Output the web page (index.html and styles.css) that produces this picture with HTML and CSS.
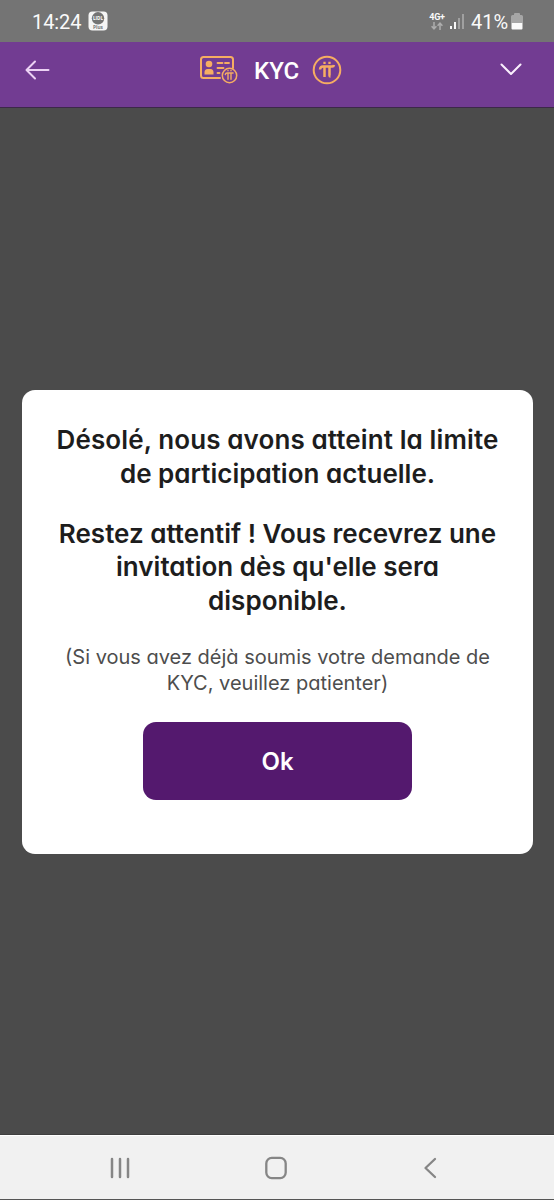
FILE: index.html
```html
<!DOCTYPE html>
<html lang="fr">
<head>
<meta charset="utf-8">
<title>KYC</title>
<link rel="stylesheet" href="styles.css">
</head>
<body>
<div class="screen">
  <div class="status">
    <span class="clock">14:24</span>
    <svg class="app-badge" width="20" height="20" viewBox="0 0 20 20">
      <rect x=".5" y=".5" width="19" height="19" rx="4" fill="#f5f5f5"/>
      <circle cx="10" cy="7.3" r="6.2" fill="#747474"/>
      <text class="badge-name" x="10" y="8.8" textLength="10" lengthAdjust="spacingAndGlyphs">LIDL</text>
      <text class="badge-plus" x="10" y="18" textLength="10" lengthAdjust="spacingAndGlyphs">Plus</text>
    </svg>
    <div class="network">
      <span class="network-type">4G+</span>
      <svg width="12" height="8" viewBox="0 0 12 8" fill="none" stroke="#adadad" stroke-width="1.5"><path d="M3 0v6.5M.6 4.2 3 6.8l2.4-2.6M9 8V1.2M6.6 3.8 9 1.2l2.4 2.6"/></svg>
    </div>
    <svg class="signal" width="15" height="16" viewBox="0 0 15 16"><path d="M0 13h2v3H0zM4 9h2v7H4z" fill="#f7f7f7"/><path d="M8 5h2v11H8zM12 1h2v15h-2z" fill="#a0a0a0"/></svg>
    <span class="percent">41%</span>
    <svg class="battery" width="12" height="17" viewBox="0 0 12 17"><path d="M3 1q0-1 1-1h4q1 0 1 1v1h1.5Q12 2 12 3.500V10H0V3.500Q0 2 1.500 2H3z" fill="#a6a6a6"/><path d="M.5 10h11v5.500q0 1-1 1h-9q-1 0-1-1z" fill="#fafafa"/></svg>
  </div>

  <header class="header">
    <svg class="back" width="26" height="20" viewBox="0 0 26 20" fill="none" stroke="#ecd2f4" stroke-width="2" stroke-linecap="round" stroke-linejoin="round"><path d="M23.500 10H2M10 1.500 1.500 10l8.500 8.500"/></svg>
    <div class="title">
      <svg width="38" height="28" viewBox="0 0 38 28" fill="none" stroke="#f6ad62" stroke-width="2" stroke-linecap="round">
        <path d="M20 22H3.500Q1 22 1 19.500v-16Q1 1 3.500 1h27Q33 1 33 3.500V12"/>
        <circle cx="9" cy="8" r="3.300" fill="#f6ad62" stroke="none"/>
        <path d="M4.500 18.500v-2q0-3.500 3-3.500h3q3 0 3 3.500v2z" fill="#f6ad62" stroke="none"/>
        <path d="M17.500 7h5M25 7h4M17.500 12h6M17.500 17h2" stroke-width="1.800"/>
        <circle cx="29.500" cy="19.500" r="7.200" stroke-width="1.500"/>
        <path d="M25.300 18.500q.3-1.500 1.800-1.500h6M28 17.200v6M31 17.200v6M28 14.500v.3M31 14.500v.3" stroke-width="1.400"/>
      </svg>
      <span class="title-text">KYC</span>
      <svg width="30" height="30" viewBox="0 0 30 30" fill="none" stroke="#f6ad62">
        <circle cx="15" cy="15" r="13.300" stroke-width="2"/>
        <path d="M8 14.500q.3-3 3-3h9.200q1.500 0 1.800-1.500" stroke-width="2.500"/>
        <path d="M12.500 11v11M17.500 11v9.500q0 1 1 1" stroke-width="2.500"/>
        <path d="M12.500 6.700v2.300M17.500 6.700v2.300" stroke-width="2.300"/>
      </svg>
    </div>
    <svg class="expand" width="22" height="13" viewBox="0 0 22 13" fill="none" stroke="#faeffd" stroke-width="2" stroke-linecap="round" stroke-linejoin="round"><path d="m1.500 1.500 9.500 9.500 9.500-9.500"/></svg>
  </header>

  <main class="backdrop">
    <section class="dialog">
      <p class="message">
        <span class="line first">Désolé, nous avons atteint la limite</span>
        <span class="line">de participation actuelle.</span>
      </p>
      <p class="message">
        <span class="line">Restez attentif ! Vous recevrez une</span>
        <span class="line">invitation dès qu'elle sera</span>
        <span class="line">disponible.</span>
      </p>
      <p class="note">
        <span class="line">(Si vous avez déjà soumis votre demande de</span>
        <span class="line">KYC, veuillez patienter)</span>
      </p>
      <button class="ok" type="button">Ok</button>
    </section>
  </main>

  <nav class="navbar">
    <svg width="22" height="24" viewBox="0 0 22 24" stroke="#868686" stroke-width="2.500" stroke-linecap="round"><path d="M3 3v18M11 3v18M19 3v18"/></svg>
    <svg width="24" height="24" viewBox="0 0 24 24" fill="none" stroke="#868686" stroke-width="2.300"><rect x="2.300" y="1.900" width="19.400" height="20.200" rx="5.500"/></svg>
    <svg width="14" height="24" viewBox="0 0 14 24" fill="none" stroke="#868686" stroke-width="2.300" stroke-linecap="round" stroke-linejoin="round"><path d="M12 3 2.500 12 12 21"/></svg>
  </nav>
</div>
</body>
</html>
```
FILE: styles.css
```css
* { box-sizing: border-box; }
body { margin: 0; background: #4b4b4b; }
svg { display: block; flex: none; }

.screen {
  width: 554px;
  height: 1200px;
  display: flex;
  flex-direction: column;
  overflow: hidden;
  font-family: Inter, "Open Sans", sans-serif;
}

.status {
  height: 42px;
  flex: none;
  display: flex;
  align-items: center;
  padding: 0 31px 0 32px;
  background: #747474;
  color: #fafafa;
  font-family: Roboto, sans-serif;
  font-size: 20px;
}
.clock { width: 50px; letter-spacing: -.1px; padding-top: 2px; }
.app-badge { margin-left: 6px; }
.badge-name { font: 700 4.500px "Open Sans", sans-serif; fill: #fff; text-anchor: middle; }
.badge-plus { font: 700 5.500px "Open Sans", sans-serif; fill: #777; text-anchor: middle; }
.network {
  margin-left: auto;
  width: 16px;
  display: flex;
  flex-direction: column;
  align-items: center;
  gap: 1px;
}
.network-type { font-size: 9px; font-weight: 700; line-height: 8px; letter-spacing: -.3px; }
.signal { margin-left: 5px; }
.percent { margin-left: 6px; width: 38px; padding-top: 2px; white-space: nowrap; }
.battery { margin-left: 2px; }

.header {
  height: 66px;
  flex: none;
  display: grid;
  grid-template-columns: 175px auto 1fr;
  align-items: center;
  padding: 0 32px 10px 25px;
  background: #723c92;
  border-bottom: 1px solid #3c2848;
}
.title { display: flex; align-items: center; }
.title-text {
  margin: 2px 13px 0 16px;
  color: #fff;
  font: 500 24px/28px Roboto, sans-serif;
}
.expand { justify-self: end; }

.backdrop {
  flex: 1;
  background: #4b4b4b;
  border-bottom: 1px solid #3f3f3f;
  padding: 282px 21px 0 22px;
}
.dialog {
  height: 464px;
  padding-top: 33px;
  border-radius: 13px;
  background: #fff;
  display: flex;
  flex-direction: column;
  align-items: center;
  text-align: center;
  font-feature-settings: "cv11" 1;
}
.line { display: block; white-space: nowrap; }
.first { letter-spacing: .11px; }
.message {
  margin: 0 0 26.500px;
  color: #1d1d1d;
  font-size: 26px;
  font-weight: 600;
  line-height: 33.500px;
}
.note {
  margin: 0;
  color: #4d4d4d;
  font-size: 20px;
  line-height: 26px;
}
.ok {
  width: 269px;
  height: 78px;
  margin-top: 26px;
  padding: 2px 0 0;
  border: 0;
  border-radius: 13px;
  background: #54196e;
  color: #fff;
  font: 600 24px/30px Inter, sans-serif;
}

.navbar {
  height: 65px;
  flex: none;
  display: flex;
  align-items: center;
  justify-content: space-between;
  padding: 1px 117px 0 109px;
  background: #f1f1f1;
  border-top: 1px solid #fff;
  border-bottom: 1px solid #555;
}
.navbar svg:nth-child(2) { margin-right: 3px; }
```
